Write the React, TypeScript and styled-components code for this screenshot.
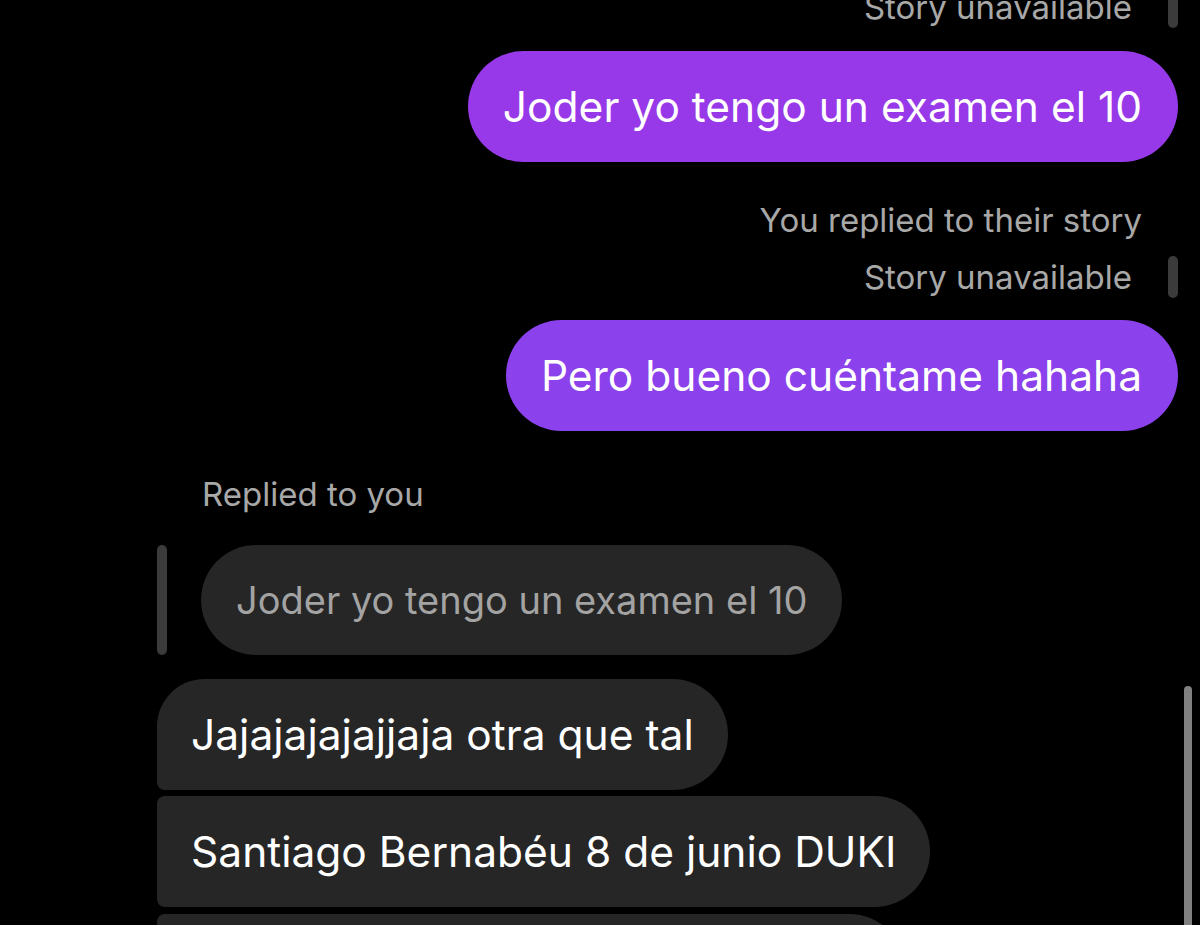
import React from "react";
import styled, { createGlobalStyle } from "styled-components";

const Global = createGlobalStyle`
  html, body { margin: 0; padding: 0; background: #000; }
  body { font-family: Inter, "Noto Sans", "Liberation Sans", sans-serif; -webkit-font-smoothing: antialiased; }
`;

const Screen = styled.div`
  position: relative;
  width: 1200px;
  height: 925px;
  overflow: hidden;
  background: #000;
`;

const Thread = styled.div`
  display: flex;
  flex-direction: column;
  margin-top: -14px;
  padding: 0 22px 0 157px;
`;

const MetaText = styled.div<{ $mr?: number; $mt?: number }>`
  align-self: flex-end;
  color: #a8a8a8;
  font-size: 33px;
  line-height: 40px;
  height: 40px;
  margin-right: ${(p) => p.$mr ?? 0}px;
  margin-top: ${(p) => p.$mt ?? 0}px;
  white-space: nowrap;
`;

const StoryRow = styled.div<{ $mt?: number }>`
  align-self: flex-end;
  display: flex;
  align-items: center;
  gap: 36px;
  height: 42px;
  margin-top: ${(p) => p.$mt ?? 0}px;
  color: #a8a8a8;
  font-size: 33px;
  white-space: nowrap;
`;

const StoryBar = styled.div`
  width: 10px;
  height: 42px;
  border-radius: 5px;
  background: #3b3b3b;
`;

const OutBubble = styled.div<{ $bg: string; $mt: number }>`
  align-self: flex-end;
  margin-top: ${(p) => p.$mt}px;
  height: 111px;
  padding: 0 36px 0 35px;
  display: flex;
  align-items: center;
  border-radius: 56px;
  background: ${(p) => p.$bg};
  color: #fff;
  font-size: 42.5px;
  white-space: nowrap;
`;

const RepliedLabel = styled.div`
  margin-top: 43px;
  margin-left: 45px;
  height: 40px;
  line-height: 40px;
  color: #a8a8a8;
  font-size: 33px;
`;

const QuoteRow = styled.div`
  margin-top: 31px;
  display: flex;
  gap: 34px;
  align-items: stretch;
`;

const QuoteBar = styled.div`
  width: 10px;
  border-radius: 5px;
  background: #3b3b3b;
`;

const QuoteBubble = styled.div`
  height: 110px;
  display: flex;
  align-items: center;
  padding: 0 35px;
  border-radius: 55px;
  background: #262626;
  color: #a3a3a3;
  font-size: 38px;
  white-space: nowrap;
`;

const InBubble = styled.div<{ $pos: "first" | "middle"; $mt: number; $w?: number }>`
  align-self: flex-start;
  box-sizing: border-box;
  margin-top: ${(p) => p.$mt}px;
  height: 111px;
  ${(p) => (p.$w ? `width: ${p.$w}px;` : "")}
  display: flex;
  align-items: center;
  padding: 0 34px;
  background: #262626;
  color: #fff;
  font-size: 42.5px;
  white-space: nowrap;
  border-radius: ${(p) => (p.$pos === "first" ? "48px 56px 56px 8px" : "8px 56px 56px 8px")};
`;

const Scrollbar = styled.div`
  position: absolute;
  right: 8px;
  top: 686px;
  width: 8px;
  height: 260px;
  border-radius: 4px;
  background: #808080;
`;

export default function App() {
  return (
    <Screen>
      <Global />
      <Thread>
        <StoryRow>
          <span>Story unavailable</span>
          <StoryBar />
        </StoryRow>
        <OutBubble $bg="#9739e8" $mt={23}>Joder yo tengo un examen el 10</OutBubble>
        <MetaText $mr={36} $mt={38}>You replied to their story</MetaText>
        <StoryRow $mt={16}>
          <span>Story unavailable</span>
          <StoryBar />
        </StoryRow>
        <OutBubble $bg="#8b41eb" $mt={22}>Pero bueno cuéntame hahaha</OutBubble>
        <RepliedLabel>Replied to you</RepliedLabel>
        <QuoteRow>
          <QuoteBar />
          <QuoteBubble>Joder yo tengo un examen el 10</QuoteBubble>
        </QuoteRow>
        <InBubble $pos="first" $mt={24}>Jajajajajajjaja otra que tal</InBubble>
        <InBubble $pos="middle" $mt={6}>Santiago Bernabéu 8 de junio DUKI</InBubble>
        <InBubble $pos="middle" $mt={7} $w={748}>&nbsp;</InBubble>
      </Thread>
      <Scrollbar />
    </Screen>
  );
}
